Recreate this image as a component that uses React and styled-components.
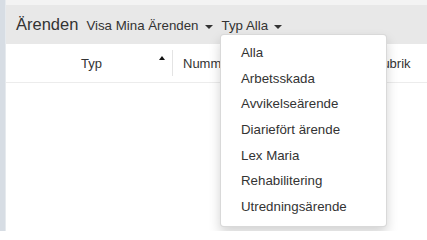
import React from 'react';
import styled, { createGlobalStyle } from 'styled-components';

const GlobalStyle = createGlobalStyle`
  html, body {
    margin: 0;
    padding: 0;
    background: #fff;
  }
  body {
    font-family: "Liberation Sans", Arial, sans-serif;
    color: #333;
  }
`;

const Page = styled.div`
  display: flex;
  width: 427px;
  height: 231px;
  overflow: hidden;
`;

const SideStrip = styled.div`
  width: 5px;
  flex-shrink: 0;
  background: #d7dde4;
  border-right: 1px solid #e6eaee;
`;

const Main = styled.div`
  position: relative;
  flex: 1;
  display: flex;
  flex-direction: column;
`;

const TopStrip = styled.div`
  height: 5px;
  background: #f3f3f3;
`;

const HeaderBar = styled.div`
  display: flex;
  align-items: baseline;
  height: 39px;
  box-sizing: border-box;
  padding: 10px 0 0 10px;
  background: #e8e8e8;
`;

const Title = styled.h1`
  margin: 0 8px 0 0;
  font-size: 16.5px;
  font-weight: normal;
  color: #333;
`;

const Toggle = styled.span`
  display: inline-flex;
  align-items: center;
  font-size: 13.3px;
  color: #333;
  margin-right: 9px;
`;

const Caret = styled.span`
  display: inline-block;
  width: 0;
  height: 0;
  margin-left: 6px;
  margin-top: 2px;
  border-top: 4px solid #333;
  border-left: 4px solid transparent;
  border-right: 4px solid transparent;
`;

const TableHead = styled.div`
  display: grid;
  grid-template-columns: 167px 190px 1fr;
  height: 38px;
  border-bottom: 1px solid #ececec;
`;

const HeadCell = styled.div`
  position: relative;
  display: flex;
  align-items: center;
  padding-left: ${props => props.pl}px;
  font-size: 13px;
  color: #333;
  ${props => props.divider && 'border-right: 1px solid #e4e4e4;'}
  margin: 6px 0;
`;

const SortArrow = styled.span`
  position: absolute;
  right: 7px;
  top: 6px;
  width: 0;
  height: 0;
  border-bottom: 4px solid #111;
  border-left: 3px solid transparent;
  border-right: 3px solid transparent;
`;

const Menu = styled.ul`
  position: absolute;
  left: 214px;
  top: 34px;
  width: 167px;
  box-sizing: border-box;
  margin: 0;
  padding: 5px 0 6px;
  list-style: none;
  background: #fff;
  border: 1px solid rgba(0, 0, 0, 0.15);
  border-radius: 4px;
  box-shadow: 0 6px 12px rgba(0, 0, 0, 0.175);
`;

const MenuItem = styled.li`
  height: 25.7px;
  line-height: 25.7px;
  padding-left: 20px;
  font-size: 13.3px;
  color: #333;
  white-space: nowrap;
`;

const types = [
  'Alla',
  'Arbetsskada',
  'Avvikelseärende',
  'Diariefört ärende',
  'Lex Maria',
  'Rehabilitering',
  'Utredningsärende',
];

const App = () => (
  <>
    <GlobalStyle />
    <Page>
      <SideStrip />
      <Main>
        <TopStrip />
        <HeaderBar>
          <Title>Ärenden</Title>
          <Toggle>Visa Mina Ärenden<Caret /></Toggle>
          <Toggle>Typ Alla<Caret /></Toggle>
        </HeaderBar>
        <TableHead>
          <HeadCell pl={75} divider>
            Typ
            <SortArrow />
          </HeadCell>
          <HeadCell pl={10}>Nummer</HeadCell>
          <HeadCell pl={10}>Rubrik</HeadCell>
        </TableHead>
        <Menu>
          {types.map(t => (
            <MenuItem key={t}>{t}</MenuItem>
          ))}
        </Menu>
      </Main>
    </Page>
  </>
);

export default App;
